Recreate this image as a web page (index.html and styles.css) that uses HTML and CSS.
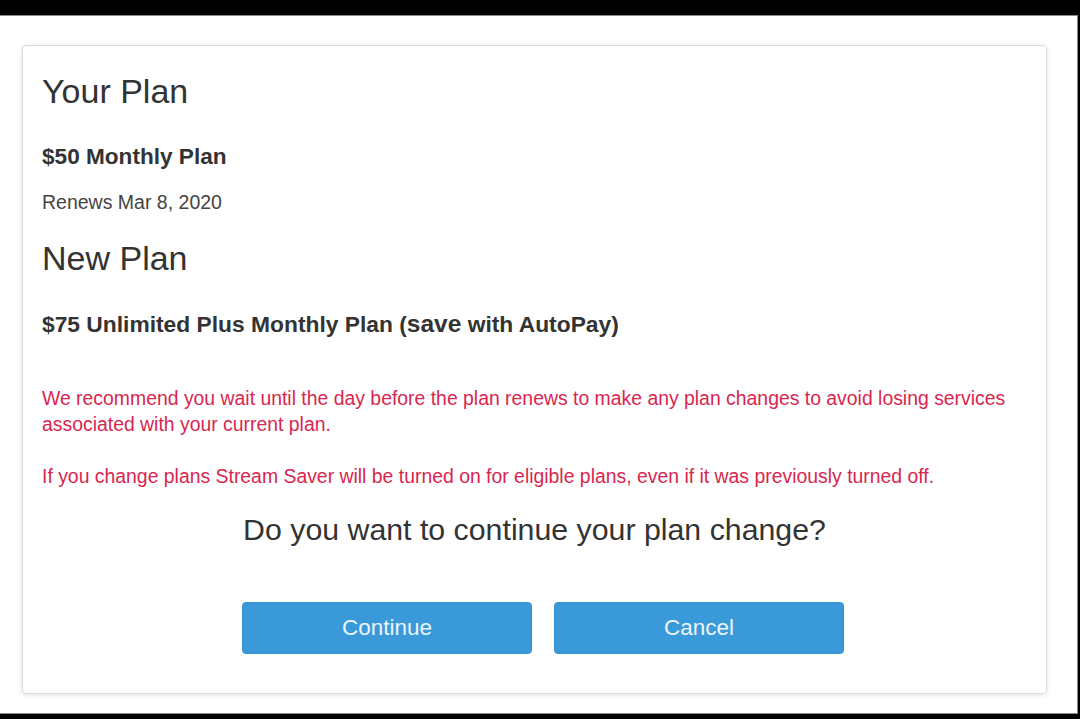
FILE: index.html
```html
<!DOCTYPE html>
<html>
<head>
<meta charset="utf-8">
<link rel="stylesheet" href="styles.css">
</head>
<body>
<div class="screen">
  <div class="card">
    <h2 class="heading h-your">Your Plan</h2>
    <p class="plan p-current">$50 Monthly Plan</p>
    <p class="renews">Renews Mar 8, 2020</p>
    <h2 class="heading h-new">New Plan</h2>
    <p class="plan p-new">$75 Unlimited Plus Monthly Plan (<span class="save">save</span> with AutoPay)</p>
    <p class="warn w-first">We recommend you wait until the day before the plan renews to make any plan changes to avoid losing services associated with your current plan.</p>
    <p class="warn w-second">If you change plans Stream Saver will be turned on for eligible plans, even if it was previously turned off.</p>
    <p class="question">Do you want to continue your plan change?</p>
    <div class="actions">
      <button class="btn">Continue</button>
      <button class="btn">Cancel</button>
    </div>
  </div>
</div>
</body>
</html>
```

FILE: styles.css
```css
html, body {
  margin: 0;
  padding: 0;
  background: #000;
  height: 719px;
  overflow: hidden;
}
.screen {
  margin: 15px 2px 0 0;
  height: 668px;
  background: #fff;
  border-top: 1px solid #8a8a8a;
  border-right: 1px solid #8a8a8a;
  border-bottom: 1px solid #8a8a8a;
  padding-top: 29px;
  font-family: "Liberation Sans", Arial, sans-serif;
}
.card {
  margin-left: 22px;
  width: 1025px;
  height: 649px;
  border: 1px solid #dcdcdc;
  border-radius: 4px;
  box-shadow: 0 1px 5px rgba(0,0,0,0.12);
  padding: 25px 0 0 19px;
  box-sizing: border-box;
}
.heading {
  margin: 0;
  font-size: 34px;
  line-height: 40px;
  font-weight: normal;
  color: #333;
}
.plan {
  margin: 0;
  font-size: 22.6px;
  line-height: 26px;
  font-weight: bold;
  color: #333;
}
.p-new {
  font-size: 22.8px;
}
.save {
  font-size: 24.5px;
}
.p-current { margin-top: 33px; }
.renews {
  margin: 20px 0 0;
  font-size: 19.5px;
  line-height: 24px;
  color: #444;
}
.h-new { margin-top: 24px; }
.p-new { margin-top: 33px; }
.warn {
  margin: 0;
  font-size: 19.4px;
  line-height: 26px;
  color: #d8264f;
  padding-right: 20px;
}
.w-first { margin-top: 48px; }
.w-second { margin-top: 26px; }
.question {
  margin: 23px 0 0;
  font-size: 30.3px;
  line-height: 36px;
  color: #333;
  text-align: center;
  padding-right: 19px;
}
.actions {
  margin-top: 54px;
  display: flex;
  gap: 22px;
  padding-left: 200px;
}
.btn {
  width: 290px;
  height: 52px;
  border: 1px solid #3590cf;
  border-radius: 4px;
  background: #3a9ad9;
  color: #eef4fb;
  font-family: "Liberation Sans", Arial, sans-serif;
  font-size: 22.5px;
  padding: 0;
}
```
